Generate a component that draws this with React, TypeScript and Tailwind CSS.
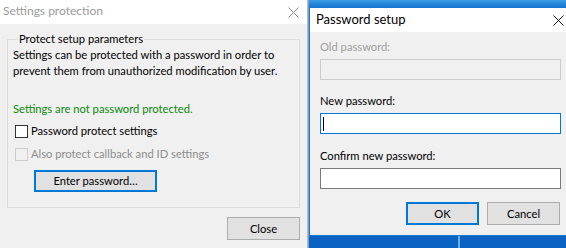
import React from 'react';

const font = "font-['Lato','Segoe_UI',sans-serif]";

const CloseGlyph = ({ color }: { color: string }) => (
  <svg width="11" height="11" viewBox="0 0 11 11" className="shrink-0">
    <path d="M0.5 0.5 L10.5 10.5 M10.5 0.5 L0.5 10.5" stroke={color} strokeWidth="1" fill="none" />
  </svg>
);

const Checkbox = ({ disabled, label }: { disabled?: boolean; label: string }) => (
  <div className="flex items-center h-[16px] ml-[2px]">
    <span
      className={
        disabled
          ? 'w-[13px] h-[13px] border border-[#cccccc] bg-[#f0f0f0] shrink-0'
          : 'w-[13px] h-[13px] border border-[#333333] bg-white shrink-0'
      }
    />
    <span className={disabled ? 'ml-[3px] text-[#8d8d8d]' : 'ml-[3px] text-black'}>{label}</span>
  </div>
);

const WinButton = ({ label, focused, className }: { label: string; focused?: boolean; className?: string }) => (
  <button
    className={
      (focused
        ? 'border-2 border-[#0078d7] '
        : 'border border-[#adadad] ') +
      'bg-[#e1e1e1] text-black flex items-center justify-center leading-none ' +
      (className ?? '')
    }
  >
    {label}
  </button>
);

const SettingsWindow = () => (
  <div className="w-[307px] shrink-0 h-full bg-[#f0f0f0] flex flex-col whitespace-nowrap">
    <div className="h-[24px] bg-white flex items-center justify-between pl-[3px] pr-[8px] shrink-0">
      <span className="text-[#9a9a9a] text-[12px] -mt-[2px]">Settings protection</span>
      <CloseGlyph color="#8a8a8a" />
    </div>
    <fieldset className="mx-[7px] mt-[7px] border border-[#dcdcdc] pl-[5px] pr-[5px] pb-[15px] min-w-0">
      <legend className="ml-[5px] px-[1px] leading-[16px] text-black">Protect setup parameters</legend>
      <p className="leading-[16px] text-black">
        Settings can be protected with a password in order to
        <br />
        prevent them from unauthorized modification by user.
      </p>
      <p className="mt-[22px] leading-[16px] text-[#0b8a0b]">Settings are not password protected.</p>
      <div className="mt-[6px] flex flex-col gap-[7px]">
        <Checkbox label="Password protect settings" />
        <Checkbox disabled label="Also protect callback and ID settings" />
      </div>
      <WinButton focused label="Enter password…" className="mt-[8px] ml-[21px] w-[123px] h-[22px]" />
    </fieldset>
    <div className="flex justify-end pr-[7px] mt-[9px]">
      <WinButton label="Close" className="w-[73px] h-[23px]" />
    </div>
  </div>
);

const Field = ({ label, disabled, active, className }: { label: string; disabled?: boolean; active?: boolean; className?: string }) => (
  <div className={'flex flex-col ' + (className ?? '')}>
    <span className={'leading-[16px] ' + (disabled ? 'text-[#a0a0a0]' : 'text-black')}>{label}</span>
    <div
      className={
        'mt-[4px] w-[241px] h-[21px] flex items-center pl-[2px] ' +
        (disabled
          ? 'bg-[#f0f0f0] border border-[#cccccc]'
          : active
            ? 'bg-white border border-[#0078d7]'
            : 'bg-white border border-[#7a7a7a]')
      }
    >
      {active && <span className="w-[1px] h-[14px] bg-black" />}
    </div>
  </div>
);

const PasswordWindow = () => (
  <div className="h-[229px] w-[262px] shrink-0 border-l border-t border-b border-[#1a79d0] bg-[#f0f0f0] flex flex-col whitespace-nowrap">
    <div className="h-[24px] bg-white flex items-center justify-between pl-[6px] pr-[7px] shrink-0">
      <span className="text-black text-[13px]">Password setup</span>
      <CloseGlyph color="#111111" />
    </div>
    <div className="pl-[10px] pt-[7px] flex flex-col">
      <Field disabled label="Old password:" />
      <Field active label="New password:" className="mt-[13px]" />
      <Field label="Confirm new password:" className="mt-[14px]" />
      <div className="w-[240px] flex justify-end gap-[8px] mt-[13px]">
        <WinButton focused label="OK" className="w-[73px] h-[23px]" />
        <WinButton label="Cancel" className="w-[73px] h-[23px]" />
      </div>
    </div>
  </div>
);

export default function App() {
  return (
    <div className={`w-[566px] h-[248px] overflow-hidden flex bg-[#0b63c1] text-[11.2px] ${font}`}>
      <SettingsWindow />
      <div className="w-[2px] shrink-0 bg-gradient-to-r from-[#c8c8c8] to-[#6f8fb5]" />
      <div className="flex-1 min-w-0 flex flex-col">
        <div className="h-[7px] shrink-0 bg-gradient-to-b from-[#3a9be6] to-[#1577d2]" />
        <PasswordWindow />
        <div className="flex-1 flex bg-[#0a62c2]">
          <div className="ml-[149px] w-[2px] bg-[#6eaee8]" />
        </div>
      </div>
    </div>
  );
}
